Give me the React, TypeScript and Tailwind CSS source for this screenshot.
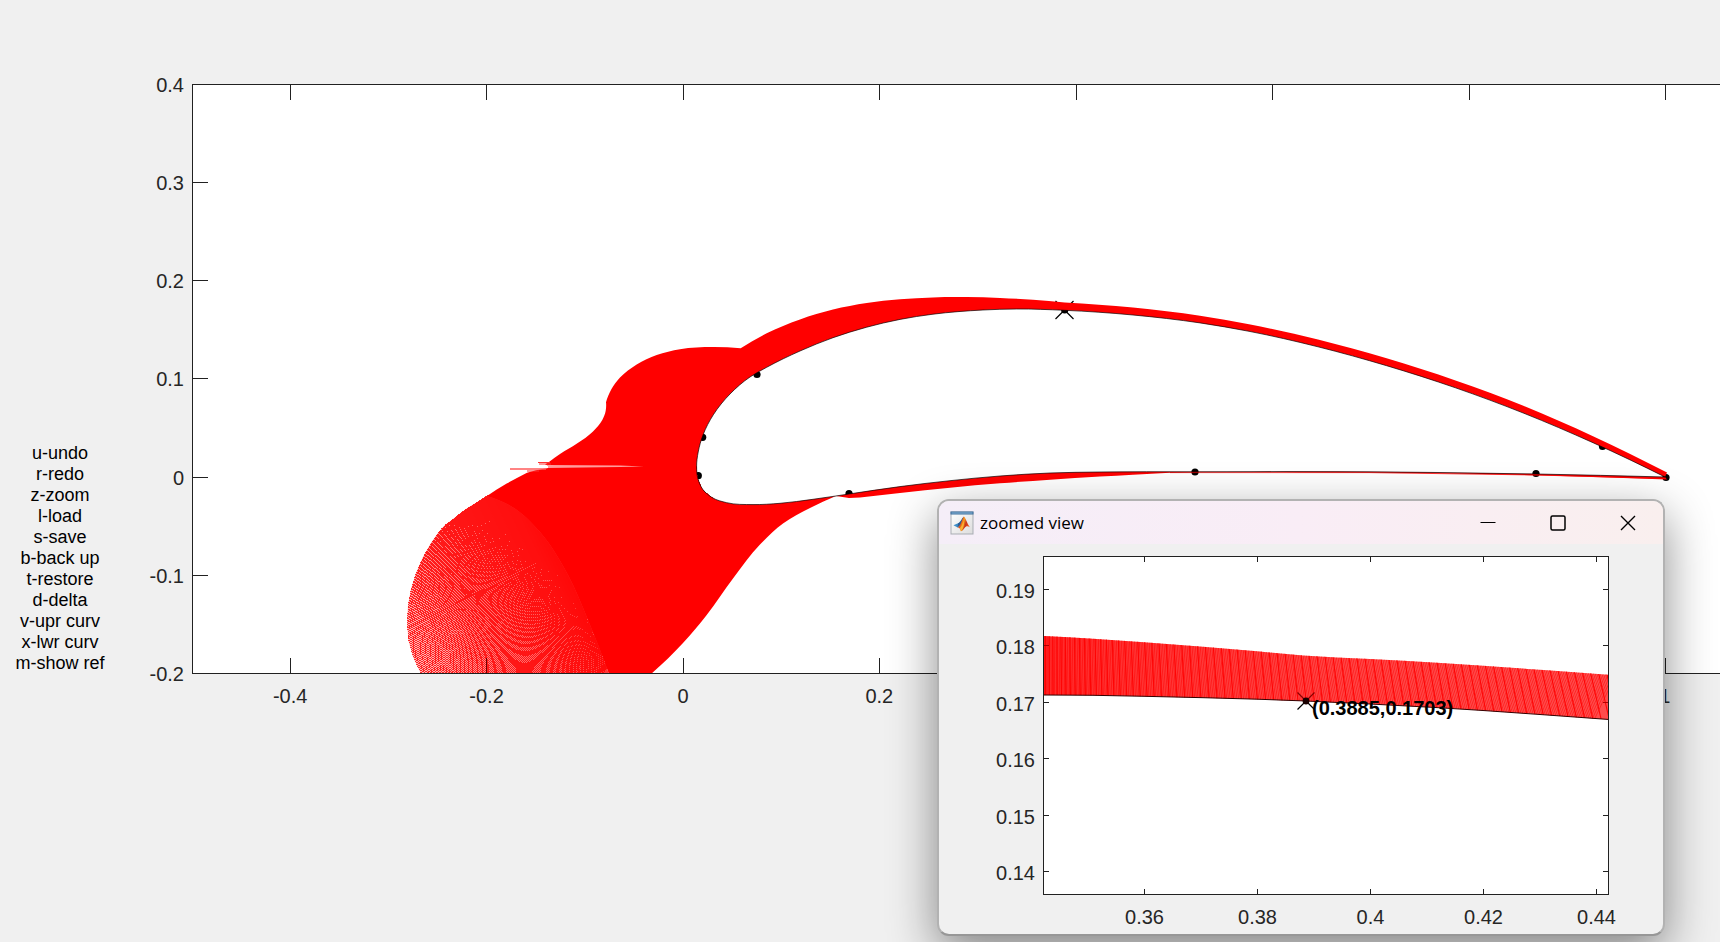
import type { ReactNode } from "react";

type Point = [number, number];

const shortcuts = [
  "u-undo",
  "r-redo",
  "z-zoom",
  "l-load",
  "s-save",
  "b-back up",
  "t-restore",
  "d-delta",
  "v-upr curv",
  "x-lwr curv",
  "m-show ref",
];

const mainYLabels = ["0.4", "0.3", "0.2", "0.1", "0", "-0.1", "-0.2"];
const mainXLabels = ["-0.4", "-0.2", "0", "0.2", "0.4", "0.6", "0.8", "1"];
const zoomYLabels = ["0.19", "0.18", "0.17", "0.16", "0.15", "0.14"];
const zoomXLabels = ["0.36", "0.38", "0.4", "0.42", "0.44"];

/* Chord-length spline through the points, without the leading move command. */
function curve(points: Point[]): string {
  const n = points.length;
  const gap = (i: number) => Math.hypot(points[i + 1][0] - points[i][0], points[i + 1][1] - points[i][1]);
  const slope = (i: number, k: 0 | 1) => (points[i + 1][k] - points[i][k]) / gap(i);
  const tangent = (i: number, k: 0 | 1): number => {
    if (i === 0) return n > 2 ? 2 * slope(0, k) - tangent(1, k) : slope(0, k);
    if (i === n - 1) return n > 2 ? 2 * slope(n - 2, k) - tangent(n - 2, k) : slope(n - 2, k);
    const a = gap(i - 1);
    const b = gap(i);
    return (b * slope(i - 1, k) + a * slope(i, k)) / (a + b);
  };
  let d = "";
  for (let i = 0; i < n - 1; i++) {
    const [p, q] = [points[i], points[i + 1]];
    const h = gap(i) / 3;
    const c = [
      p[0] + h * tangent(i, 0),
      p[1] + h * tangent(i, 1),
      q[0] - h * tangent(i + 1, 0),
      q[1] - h * tangent(i + 1, 1),
    ].map((v) => v.toFixed(2));
    d += ` C${c.join(" ")} ${q[0]} ${q[1]}`;
  }
  return d;
}

const at = (p: Point) => `${p[0].toFixed(2)} ${p[1].toFixed(2)}`;

function sample(points: Point[], t: number): Point {
  const lengths = points.slice(1).map((p, i) => Math.hypot(p[0] - points[i][0], p[1] - points[i][1]));
  let rest = t * lengths.reduce((a, b) => a + b, 0);
  for (let i = 0; i < lengths.length; i++) {
    if (rest <= lengths[i]) {
      const [p, q, k] = [points[i], points[i + 1], rest / lengths[i]];
      return [p[0] + (q[0] - p[0]) * k, p[1] + (q[1] - p[1]) * k];
    }
    rest -= lengths[i];
  }
  return points[points.length - 1];
}

/* Foil outline: trailing edge, over the top, round the nose, back along the bottom. */
const foil: Point[] = [
  [1665, 477], [1593, 442.7], [1524, 413.3], [1455.5, 387.8], [1386.6, 365.7], [1318, 346.8],
  [1249, 331.3], [1200, 322.9], [1133, 315], [1064.7, 310.3], [1016.7, 309], [983, 310],
  [933, 314.2], [900, 319.4], [866.7, 327.2], [833, 337.7], [800, 351], [766.7, 367.3],
  [750, 377], [730, 394], [713.3, 414.8], [703, 435], [698.2, 452], [696.6, 466.7],
  [698, 479], [703, 489.7], [712.5, 497.8], [726.7, 502.7], [753, 504.6], [780, 503.3],
  [813, 499.3], [849, 494], [900, 486.6], [950, 480.7], [1000, 476], [1050, 473],
  [1100, 472], [1193, 471.8], [1369, 471.8], [1438, 472.5], [1536, 474], [1665, 477],
];

const upperBand: Point[] = [
  [1667, 472.5], [1593, 436.2], [1524, 406], [1455.5, 380.4], [1386.6, 358.3], [1318, 339.6],
  [1249, 324.2], [1200, 315.7], [1133, 307.5], [1064.7, 302.4],
];

const crestBand: Point[] = [
  [1064.7, 302.4], [1033, 299.8], [1000, 298], [966.7, 297.1], [933, 297.4], [900, 299.3],
  [866.7, 303.1], [833, 309.6], [800, 319.4], [766.7, 333.3], [740.7, 348.3],
];

const noseUpper: Point[] = [
  [740.7, 348.3], [713, 347], [680, 349.2], [656.7, 355], [636.7, 364.5], [620, 377.6],
  [611.5, 389], [606, 402.3],
];

const noseNeck: Point[] = [
  [606, 402.3], [605.7, 410.7], [602.3, 420], [593, 431.4], [577, 443.5], [560, 454], [549.3, 461.7],
];

const noseLower: Point[] = [[527, 472.7], [506.7, 483.6], [487, 496]];
const solidEdge: Point[] = [[487, 496], [514, 508], [540, 532], [568, 575], [588, 620], [609, 674]];

const rearEdge: Point[] = [
  [651, 674], [683, 643], [706.7, 615], [733, 578.5], [760, 544.5], [783, 523.5], [810, 508], [836, 496],
];

const lowerBand: Point[] = [
  [860, 497.4], [900, 492.9], [950, 487.7], [1000, 483.3], [1050, 479.7],
  [1100, 476.6], [1133, 474.7], [1170, 472.8], [1300, 472.2], [1438, 473.2], [1536, 475.3], [1667, 479.6],
];

const solidPath =
  `M${at(foil[0])}${curve(foil)} L1667 479.6` +
  `${curve([...lowerBand].reverse())}` +
  ` L849 498 L836 496${curve([...rearEdge].reverse())} L609 674` +
  `${curve([...solidEdge].reverse())}` +
  `${curve([...noseLower].reverse())}` +
  ` L536 470.2 L548 468 L548 465.4 L545 464.4 L549.3 461.7` +
  `${curve([...noseNeck].reverse())}` +
  `${curve([...noseUpper].reverse())}` +
  `${curve([...crestBand].reverse())}` +
  `${curve([...upperBand].reverse())} Z`;

const fanTips: Point[] = [
  [487, 496], [466, 509], [444, 526], [438, 533], [431, 543], [423, 557], [416, 573],
  [411, 589], [408, 605], [407, 623], [408.5, 641], [413, 657], [421, 674], [432, 694],
  [448, 716], [470, 740], [498, 766], [530, 790],
];
const fanRoots: Point[] = [[696.7, 466], [697.7, 478.3], [703, 490], [713, 497.7]];

const fanArea = `M${fanTips.map(at).join("L")}L620 790L609 674${curve([...solidEdge].reverse())}Z`;

const fanPath = Array.from({ length: 206 }, (_, i) => {
  const t = i / 205;
  return `M${at(sample(fanRoots, t))}L${at(sample(fanTips, t))}`;
}).join("");

const knots: Point[] = [
  [757, 374.5], [702.7, 437.3], [698.3, 475.7], [849, 493.7], [1195, 472], [1536, 473.5],
  [1602.5, 446.5], [1666, 477.5], [1064.7, 310],
];

const mainXTicks = [290, 486, 683, 879, 1076, 1272, 1469, 1665, 1861];
const mainYTicks = [182, 280, 378, 477, 575];

function MainPlot() {
  return (
    <svg className="block h-full w-full" role="img" aria-label="Airfoil with curvature comb">
      <defs>
        <linearGradient id="fan-fill" gradientUnits="userSpaceOnUse" x1="412" y1="640" x2="582" y2="560">
          <stop offset="0" stopColor="#ffb4b4" />
          <stop offset="0.35" stopColor="#ff7c7c" />
          <stop offset="0.8" stopColor="#ff4a4a" />
          <stop offset="1" stopColor="#ff1010" />
        </linearGradient>
      </defs>
      <g transform="translate(-193 -85)">
        <g stroke="#212121" shapeRendering="crispEdges">
          {mainXTicks.map((x) => (
            <path key={x} d={`M${x + 0.5} 85v15M${x + 0.5} 658v15`} />
          ))}
          {mainYTicks.map((y) => (
            <path key={y} d={`M193 ${y + 0.5}h15`} />
          ))}
        </g>
        {knots.map(([x, y]) => (
          <circle key={x} cx={x} cy={y} r="3.6" />
        ))}
        <path d="M1055.5 301l18 18M1073.5 301l-18 18" stroke="#000" strokeWidth="1.2" />
        <path d={fanArea} fill="url(#fan-fill)" />
        <path d={fanPath} stroke="#f00" strokeWidth="1" fill="none" opacity="0.8" shapeRendering="crispEdges" />
        <path d={solidPath} fill="#f00" fillRule="evenodd" />
        <path d="M486.500 658v15" stroke="#700000" shapeRendering="crispEdges" />
        <path d="M538 462.5h12M539 464h12" stroke="#ff3030" />
        <path d="M510 469h36" stroke="#ff5a5a" strokeWidth="1.6" />
        <path d="M527 471h12" stroke="#ff3030" />
        <path d="M548 465L620 465.4L644 466.4L620 467L548 468Z" fill="#ff9c9c" />
        <path d="M1170 472.6L1369 472.6L1536 475L1665 478.5" stroke="#f00" strokeWidth="0.8" fill="none" />
        <path d={`M${at(foil[0])}${curve(foil)}`} stroke="#000" strokeWidth="0.8" fill="none" opacity="0.85" />
      </g>
    </svg>
  );
}

const zoomOuter: Point[] = [
  [1043, 636], [1093, 638.7], [1144, 642.3], [1203, 646.7], [1257, 651.3], [1303, 655.5],
  [1370, 659], [1437, 662.7], [1483, 665.7], [1547, 670.3], [1609, 674.7],
];
const zoomInner: Point[] = [
  [1043, 695], [1093, 695.3], [1144, 696.3], [1203, 697.7], [1257, 699.2], [1306, 701],
  [1370, 704], [1437, 707.6], [1483, 710.5], [1547, 715], [1609, 719.5],
];
const zoomBand = `M${at(zoomOuter[0])}${curve(zoomOuter)} L1609 719.5${curve([...zoomInner].reverse())} Z`;

function strokes(step: (i: number) => number, count: number, lean: number) {
  let x = 1042;
  let d = "";
  for (let i = 0; i < count; i++) {
    const shift = ((x - 1043) / 565) * lean;
    d += `M${(x - shift).toFixed(1)} 630L${(x + shift).toFixed(1)} 724`;
    x += step(i);
  }
  return d;
}
const coarseStrokes = strokes((i) => 3.5 + Math.min(i * 0.18, 4.5), 90, 11);
const fineStrokes = strokes(() => 2.5, 230, -22);

function ZoomPlot() {
  return (
    <svg className="block h-full w-full" role="img" aria-label="Curvature comb near the selected point">
      <defs>
        <clipPath id="band-clip">
          <path d={zoomBand} />
        </clipPath>
        <linearGradient id="band-fill">
          <stop offset="0" stopColor="#ff2a2a" />
          <stop offset="0.5" stopColor="#ff4444" />
          <stop offset="1" stopColor="#ff4c4c" />
        </linearGradient>
      </defs>
      <g transform="translate(-1044 -557)">
        <g stroke="#212121" shapeRendering="crispEdges">
          {[1144, 1257, 1370, 1483, 1596].map((x) => (
            <path key={x} d={`M${x + 0.5} 557v5M${x + 0.5} 889v5`} />
          ))}
          {[589, 645, 702, 758, 815, 871].map((y) => (
            <path key={y} d={`M1044 ${y + 0.5}h5M1603 ${y + 0.5}h5`} />
          ))}
        </g>
        <path d={zoomBand} fill="url(#band-fill)" />
        <g clipPath="url(#band-clip)" stroke="#f00" fill="none">
          <path d={fineStrokes} strokeWidth="1" opacity="0.5" />
          <path d={coarseStrokes} strokeWidth="1.1" opacity="0.9" />
          <path d="M1044 645.5h5M1603 702.5h5" stroke="#b00000" />
        </g>
        <path d={`M${at(zoomInner[0])}${curve(zoomInner)}`} stroke="#300" strokeWidth="1" fill="none" />
        <path d="M1297.5 692.5l8 8M1314.5 692.5l-8 8" stroke="#8a0000" strokeWidth="1.2" />
        <path d="M1306 701l-8.500 8.500M1306 701l8.500 8.500" stroke="#000" strokeWidth="1.2" />
        <circle cx="1306" cy="701" r="3.4" fill="#1a0000" />
      </g>
    </svg>
  );
}

function MatlabIcon() {
  return (
    <svg className="size-6" viewBox="0 0 24 24" aria-hidden="true">
      <defs>
        <linearGradient id="icon-page" x1="0" y1="0" x2="1" y2="1">
          <stop offset="0" stopColor="#fff" />
          <stop offset="1" stopColor="#dcdcdc" />
        </linearGradient>
        <linearGradient id="icon-flame" x1="0" y1="0" x2="1" y2="0.4">
          <stop offset="0" stopColor="#5a1f10" />
          <stop offset="0.4" stopColor="#e0561a" />
          <stop offset="0.55" stopColor="#f7a021" />
          <stop offset="0.75" stopColor="#c8321a" />
          <stop offset="1" stopColor="#e9571d" />
        </linearGradient>
      </defs>
      <rect x="1" y="1" width="22" height="22" fill="url(#icon-page)" stroke="#a9adb3" />
      <rect x="0.500" y="0.500" width="23" height="3" fill="#3c6e9c" />
      <rect x="1.500" y="1.500" width="21" height="1" fill="#8db9dc" />
      <path d="M3.500 14.200L8 12.300L9.800 13.200L7.500 16.600Z" fill="#3f8fc9" />
      <path d="M8 12.300C10 11.800 11.500 8 13.500 5.800L12 13L7.500 16.600Z" fill="#2a5c93" />
      <path d="M13.800 5.500C15.500 6.500 17 12 19.800 16.200C17.500 14.500 16 15 14.500 17C13.300 18.700 12.300 20.200 10.800 20.300C10.300 18 9.300 16.400 7.500 16.600C11 14.800 11.800 8 13.800 5.500Z" fill="url(#icon-flame)" />
      <path d="M10 17C12 15.500 12.800 12 13.800 10C14.200 13 13.800 17 11 20.200C10.800 19 10.600 18 10 17Z" fill="#f9b233" />
    </svg>
  );
}

function CaptionButton({ label, children }: { label: string; children: ReactNode }) {
  return (
    <button type="button" aria-label={label} className="flex h-full w-[70px] items-center justify-center">
      <svg className="size-4" viewBox="0 0 16 16" fill="none" stroke="#000">
        {children}
      </svg>
    </button>
  );
}

function ZoomWindow() {
  return (
    <section
      aria-label="zoomed view"
      className="absolute top-[499px] left-[937px] flex h-[437px] w-[728px] flex-col overflow-hidden rounded-xl border-2 border-[#b2b2b2] border-b-[#979797] bg-[#f0f0f0] shadow-[0_16px_48px_rgba(0,0,0,0.45)]"
    >
      <header className="flex h-[43px] items-center bg-linear-to-r from-[#f5eef8] via-[#f9edf6] to-[#f9efee] pl-[11px]">
        <MatlabIcon />
        <h1 className="ml-[6px] flex-1 font-['Open_Sans','Noto_Sans',sans-serif] text-[17px] leading-6 text-black">
          zoomed view
        </h1>
        <CaptionButton label="Minimize">
          <path d="M0.500 7.500h15" />
        </CaptionButton>
        <CaptionButton label="Maximize">
          <rect x="1" y="1" width="14" height="14" rx="1.500" strokeWidth="1.500" />
        </CaptionButton>
        <CaptionButton label="Close">
          <path d="M1 1l14 14M15 1L1 15" strokeWidth="1.400" />
        </CaptionButton>
      </header>
      <div className="flex flex-1 pt-3">
        <ul className="mt-[23px] mr-2 flex h-[306px] w-24 flex-col justify-between text-right">
          {zoomYLabels.map((label) => (
            <li key={label}>{label}</li>
          ))}
        </ul>
        <div>
          <div className="relative h-[339px] w-[566px] border border-[#212121] bg-white">
            <ZoomPlot />
            <span className="absolute top-[139px] left-[268px] font-bold text-black">(0.3885,0.1703)</span>
          </div>
          <ul className="mt-[10px] ml-[45px] grid w-[565px] grid-cols-5 text-center">
            {zoomXLabels.map((label) => (
              <li key={label}>{label}</li>
            ))}
          </ul>
        </div>
      </div>
    </section>
  );
}

export default function App() {
  return (
    <main className="relative min-h-screen overflow-hidden bg-[#f0f0f0] pt-[84px] font-['Liberation_Sans',Arial,sans-serif] text-[20px] leading-6 text-[#262626]">
      <div className="flex items-start">
        <aside className="flex h-[590px] w-[120px] flex-col justify-end text-center text-[18px] leading-[21px] text-black">
          {shortcuts.map((item) => (
            <p key={item}>{item}</p>
          ))}
        </aside>
        <ul className="-mt-[11px] mr-2 flex h-[613px] w-16 flex-col justify-between text-right">
          {mainYLabels.map((label) => (
            <li key={label}>{label}</li>
          ))}
        </ul>
        <div className="min-w-0 flex-1">
          <div className="h-[590px] border-y border-l border-[#212121] bg-white">
            <MainPlot />
          </div>
          <ul className="mt-[10px] grid w-[1571px] grid-cols-8 text-center">
            {mainXLabels.map((label) => (
              <li key={label}>{label}</li>
            ))}
          </ul>
        </div>
      </div>
      <ZoomWindow />
    </main>
  );
}
